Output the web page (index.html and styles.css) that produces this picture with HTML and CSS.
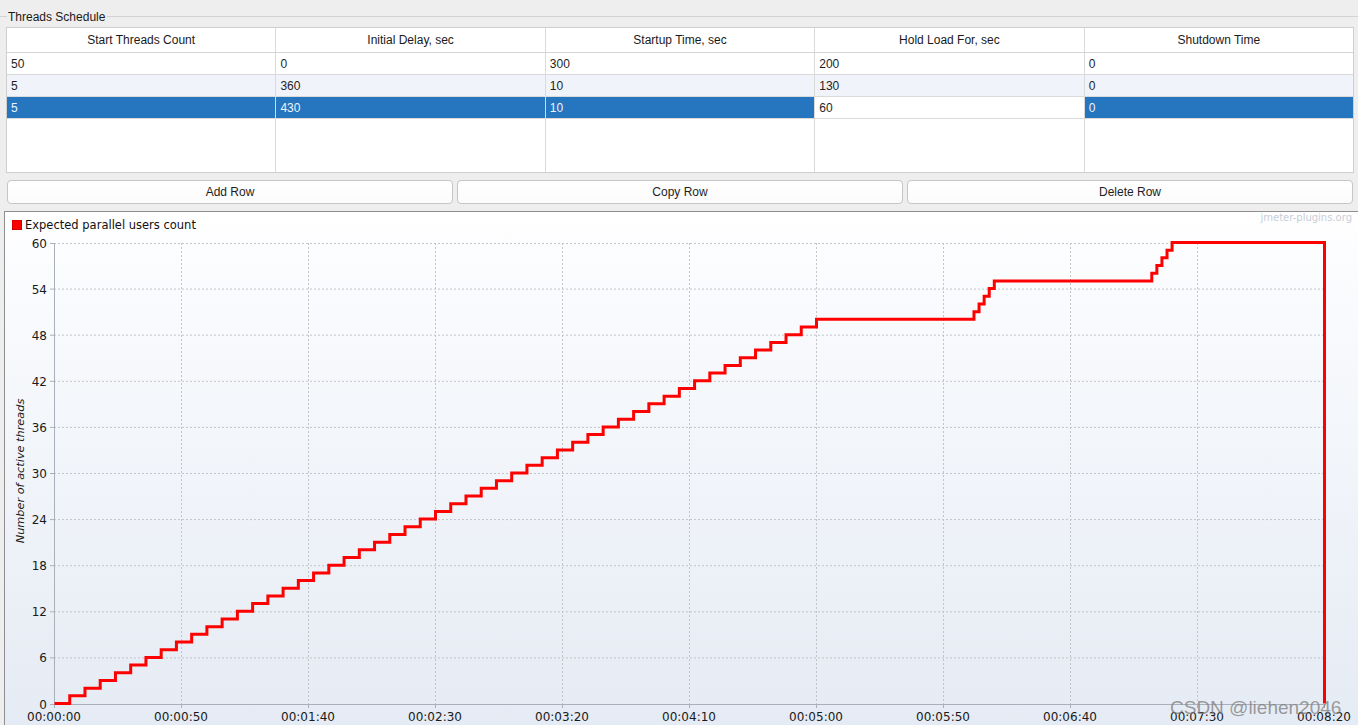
FILE: index.html
```html
<!DOCTYPE html>
<html>
<head>
<meta charset="utf-8">
<link rel="stylesheet" href="styles.css">
</head>
<body>
<div class="titled">
  <span class="tline tline-left"></span>
  <span class="ttext">Threads Schedule</span>
  <span class="tline tline-right"></span>
</div>

<div class="grid">
  <div class="row head">
    <div class="cell">Start Threads Count</div>
    <div class="cell">Initial Delay, sec</div>
    <div class="cell">Startup Time, sec</div>
    <div class="cell">Hold Load For, sec</div>
    <div class="cell">Shutdown Time</div>
  </div>
  <div class="row">
    <div class="cell">50</div>
    <div class="cell">0</div>
    <div class="cell">300</div>
    <div class="cell">200</div>
    <div class="cell">0</div>
  </div>
  <div class="row alt">
    <div class="cell">5</div>
    <div class="cell">360</div>
    <div class="cell">10</div>
    <div class="cell">130</div>
    <div class="cell">0</div>
  </div>
  <div class="row sel">
    <div class="cell">5</div>
    <div class="cell">430</div>
    <div class="cell">10</div>
    <div class="cell focus">60</div>
    <div class="cell">0</div>
  </div>
  <div class="row filler">
    <div class="cell"></div>
    <div class="cell"></div>
    <div class="cell"></div>
    <div class="cell"></div>
    <div class="cell"></div>
  </div>
</div>

<div class="buttons">
  <button class="btn">Add Row</button>
  <button class="btn">Copy Row</button>
  <button class="btn">Delete Row</button>
</div>

<div class="chart">
  <div class="legend">
    <span class="swatch"></span>
    <span class="legend-text">Expected parallel users count</span>
  </div>
  <div class="brand">jmeter-plugins.org</div>
  <svg class="plot" width="1353" height="493" viewBox="5 232 1353 493">
    <g class="gridlines">
      <line x1="54" y1="656.9" x2="1324" y2="656.9"/>
      <line x1="54" y1="610.8" x2="1324" y2="610.8"/>
      <line x1="54" y1="564.7" x2="1324" y2="564.7"/>
      <line x1="54" y1="518.6" x2="1324" y2="518.6"/>
      <line x1="54" y1="472.5" x2="1324" y2="472.5"/>
      <line x1="54" y1="426.4" x2="1324" y2="426.4"/>
      <line x1="54" y1="380.3" x2="1324" y2="380.3"/>
      <line x1="54" y1="334.2" x2="1324" y2="334.2"/>
      <line x1="54" y1="288.1" x2="1324" y2="288.1"/>
      <line x1="54" y1="242.5" x2="1324" y2="242.5"/>
      <line x1="181.5" y1="242" x2="181.5" y2="703"/>
      <line x1="308.5" y1="242" x2="308.5" y2="703"/>
      <line x1="435.5" y1="242" x2="435.5" y2="703"/>
      <line x1="562.5" y1="242" x2="562.5" y2="703"/>
      <line x1="689.5" y1="242" x2="689.5" y2="703"/>
      <line x1="816.5" y1="242" x2="816.5" y2="703"/>
      <line x1="943.5" y1="242" x2="943.5" y2="703"/>
      <line x1="1070.5" y1="242" x2="1070.5" y2="703"/>
      <line x1="1197.5" y1="242" x2="1197.5" y2="703"/>
    </g>
    <g class="axes">
      <line x1="54.5" y1="242" x2="54.5" y2="707"/>
      <line x1="50" y1="703.5" x2="1324" y2="703.5"/>
      <line x1="50" y1="656.9" x2="54" y2="656.9"/>
      <line x1="50" y1="610.8" x2="54" y2="610.8"/>
      <line x1="50" y1="564.7" x2="54" y2="564.7"/>
      <line x1="50" y1="518.6" x2="54" y2="518.6"/>
      <line x1="50" y1="472.5" x2="54" y2="472.5"/>
      <line x1="50" y1="426.4" x2="54" y2="426.4"/>
      <line x1="50" y1="380.3" x2="54" y2="380.3"/>
      <line x1="50" y1="334.2" x2="54" y2="334.2"/>
      <line x1="50" y1="288.1" x2="54" y2="288.1"/>
      <line x1="50" y1="242.5" x2="54" y2="242.5"/>
      <line x1="181.5" y1="703" x2="181.5" y2="707"/>
      <line x1="308.5" y1="703" x2="308.5" y2="707"/>
      <line x1="435.5" y1="703" x2="435.5" y2="707"/>
      <line x1="562.5" y1="703" x2="562.5" y2="707"/>
      <line x1="689.5" y1="703" x2="689.5" y2="707"/>
      <line x1="816.5" y1="703" x2="816.5" y2="707"/>
      <line x1="943.5" y1="703" x2="943.5" y2="707"/>
      <line x1="1070.5" y1="703" x2="1070.5" y2="707"/>
      <line x1="1197.5" y1="703" x2="1197.5" y2="707"/>
      <line x1="1324.5" y1="703" x2="1324.5" y2="707"/>
    </g>
    <g class="yticks">
      <text x="47" y="708">0</text>
      <text x="47" y="661.4">6</text>
      <text x="47" y="615.3">12</text>
      <text x="47" y="569.2">18</text>
      <text x="47" y="523.1">24</text>
      <text x="47" y="477">30</text>
      <text x="47" y="430.9">36</text>
      <text x="47" y="384.8">42</text>
      <text x="47" y="338.7">48</text>
      <text x="47" y="292.6">54</text>
      <text x="47" y="246.5">60</text>
    </g>
    <g class="xticks">
      <text x="54" y="720">00:00:00</text>
      <text x="181" y="720">00:00:50</text>
      <text x="308" y="720">00:01:40</text>
      <text x="435" y="720">00:02:30</text>
      <text x="562" y="720">00:03:20</text>
      <text x="689" y="720">00:04:10</text>
      <text x="816" y="720">00:05:00</text>
      <text x="943" y="720">00:05:50</text>
      <text x="1070" y="720">00:06:40</text>
      <text x="1197" y="720">00:07:30</text>
      <text x="1324" y="720">00:08:20</text>
    </g>
    <text class="ytitle" transform="translate(24 470) rotate(-90)">Number of active threads</text>
    <g transform="translate(54.5 702.5) scale(2.54 -7.6833)">
      <path class="series" d="M0 0 h6v1h6v1h6v1h6v1h6v1h6v1h6v1h6v1h6v1h6v1 h6v1h6v1h6v1h6v1h6v1h6v1h6v1h6v1h6v1h6v1 h6v1h6v1h6v1h6v1h6v1h6v1h6v1h6v1h6v1h6v1 h6v1h6v1h6v1h6v1h6v1h6v1h6v1h6v1h6v1h6v1 h6v1h6v1h6v1h6v1h6v1h6v1h6v1h6v1h6v1h6v1 H362 v1h2v1h2v1h2v1h2v1 H432 v1h2v1h2v1h2v1h2v1 H500 V0"/>
    </g>
  </svg>
  <div class="csdn">CSDN @liehen2046</div>
</div>
</body>
</html>
```

FILE: styles.css
```css
html, body {
  margin: 0;
  padding: 0;
}
body {
  width: 1358px;
  height: 725px;
  overflow: hidden;
  background: #eeeeee;
  font-family: "Liberation Sans", Arial, sans-serif;
  font-size: 12px;
  color: #1e1e1e;
}

.titled {
  display: flex;
  align-items: center;
  height: 16px;
  margin-top: 8px;
}
.tline {
  height: 1px;
  background: #d3d3d3;
}
.tline-left {
  width: 7px;
}
.tline-right {
  flex: 1;
}
.ttext {
  padding: 2px 2px 0 1px;
  line-height: 16px;
  color: #1a1a1a;
}

.grid {
  box-sizing: border-box;
  width: 1348px;
  height: 146px;
  margin: 3px 0 0 6px;
  border: 1px solid #cfcfcf;
  background: #ffffff;
  display: flex;
  flex-direction: column;
}
.row {
  display: flex;
  height: 21px;
  border-bottom: 1px solid #dadada;
  flex: none;
}
.row.head {
  height: 24px;
  border-bottom-color: #d4d4d4;
}
.row.filler {
  flex: 1;
  border-bottom: none;
}
.cell {
  flex: 1;
  min-width: 0;
  border-right: 1px solid #dadada;
  padding: 1px 0 0 4px;
  line-height: 20px;
  white-space: nowrap;
  overflow: hidden;
}
.cell:last-child {
  border-right: none;
}
.head .cell {
  text-align: center;
  padding: 1px 0 0 0;
  line-height: 23px;
  color: #1a1a1a;
}
.alt {
  background: #f0f3f9;
}
.sel {
  background: #2675bf;
  color: #eef3fa;
}
.sel .cell.focus {
  background: #ffffff;
  color: #1e1e1e;
}

.buttons {
  display: flex;
  gap: 4px;
  margin: 7px 5px 0 7px;
}
.btn {
  flex: 1;
  height: 24px;
  padding: 0;
  border: 1px solid #c6c6c6;
  border-radius: 4px;
  background: linear-gradient(#ffffff, #fbfbfb);
  font-family: "Liberation Sans", Arial, sans-serif;
  font-size: 12px;
  color: #1e1e1e;
}

.chart {
  position: relative;
  box-sizing: border-box;
  margin: 7px 0 0 4px;
  height: 514px;
  border-top: 1px solid #8e8e8e;
  border-left: 1px solid #8e8e8e;
  background: linear-gradient(#ffffff 0%, #fbfcfe 10%, #e5ebf4 100%);
  font-family: "DejaVu Sans", sans-serif;
}
.legend {
  display: flex;
  align-items: center;
  height: 14px;
  margin: 6px 0 1px 0;
  padding-left: 7px;
  gap: 3px;
}
.swatch {
  box-sizing: border-box;
  width: 10px;
  height: 10px;
  background: #ff0000;
  border: 1px solid #d40000;
}
.legend-text {
  font-size: 11.5px;
  color: #111;
  line-height: 14px;
}
.brand {
  position: absolute;
  top: 0;
  right: 6px;
  font-size: 10px;
  line-height: 12px;
  color: #c8ced8;
}
.plot {
  display: block;
}
.gridlines line {
  stroke: #c2c4c8;
  stroke-width: 1;
  stroke-dasharray: 2 2;
}
.axes line {
  stroke: #aab0bb;
  stroke-width: 1;
}
.yticks text {
  font-family: "DejaVu Sans", sans-serif;
  font-size: 12px;
  fill: #1a1a1a;
  text-anchor: end;
}
.xticks text {
  font-family: "DejaVu Sans", sans-serif;
  font-size: 12px;
  fill: #1a1a1a;
  text-anchor: middle;
}
.ytitle {
  font-family: "DejaVu Sans", sans-serif;
  font-style: italic;
  font-size: 11.3px;
  fill: #1a1a1a;
  text-anchor: middle;
}
.series {
  fill: none;
  stroke: #ff0000;
  stroke-width: 3;
  vector-effect: non-scaling-stroke;
  stroke-linejoin: miter;
}
.csdn {
  position: absolute;
  left: 1165px;
  top: 485px;
  font-family: "Liberation Sans", Arial, sans-serif;
  font-size: 19px;
  line-height: 22px;
  color: rgba(125, 125, 125, 0.75);
  white-space: nowrap;
}
```
